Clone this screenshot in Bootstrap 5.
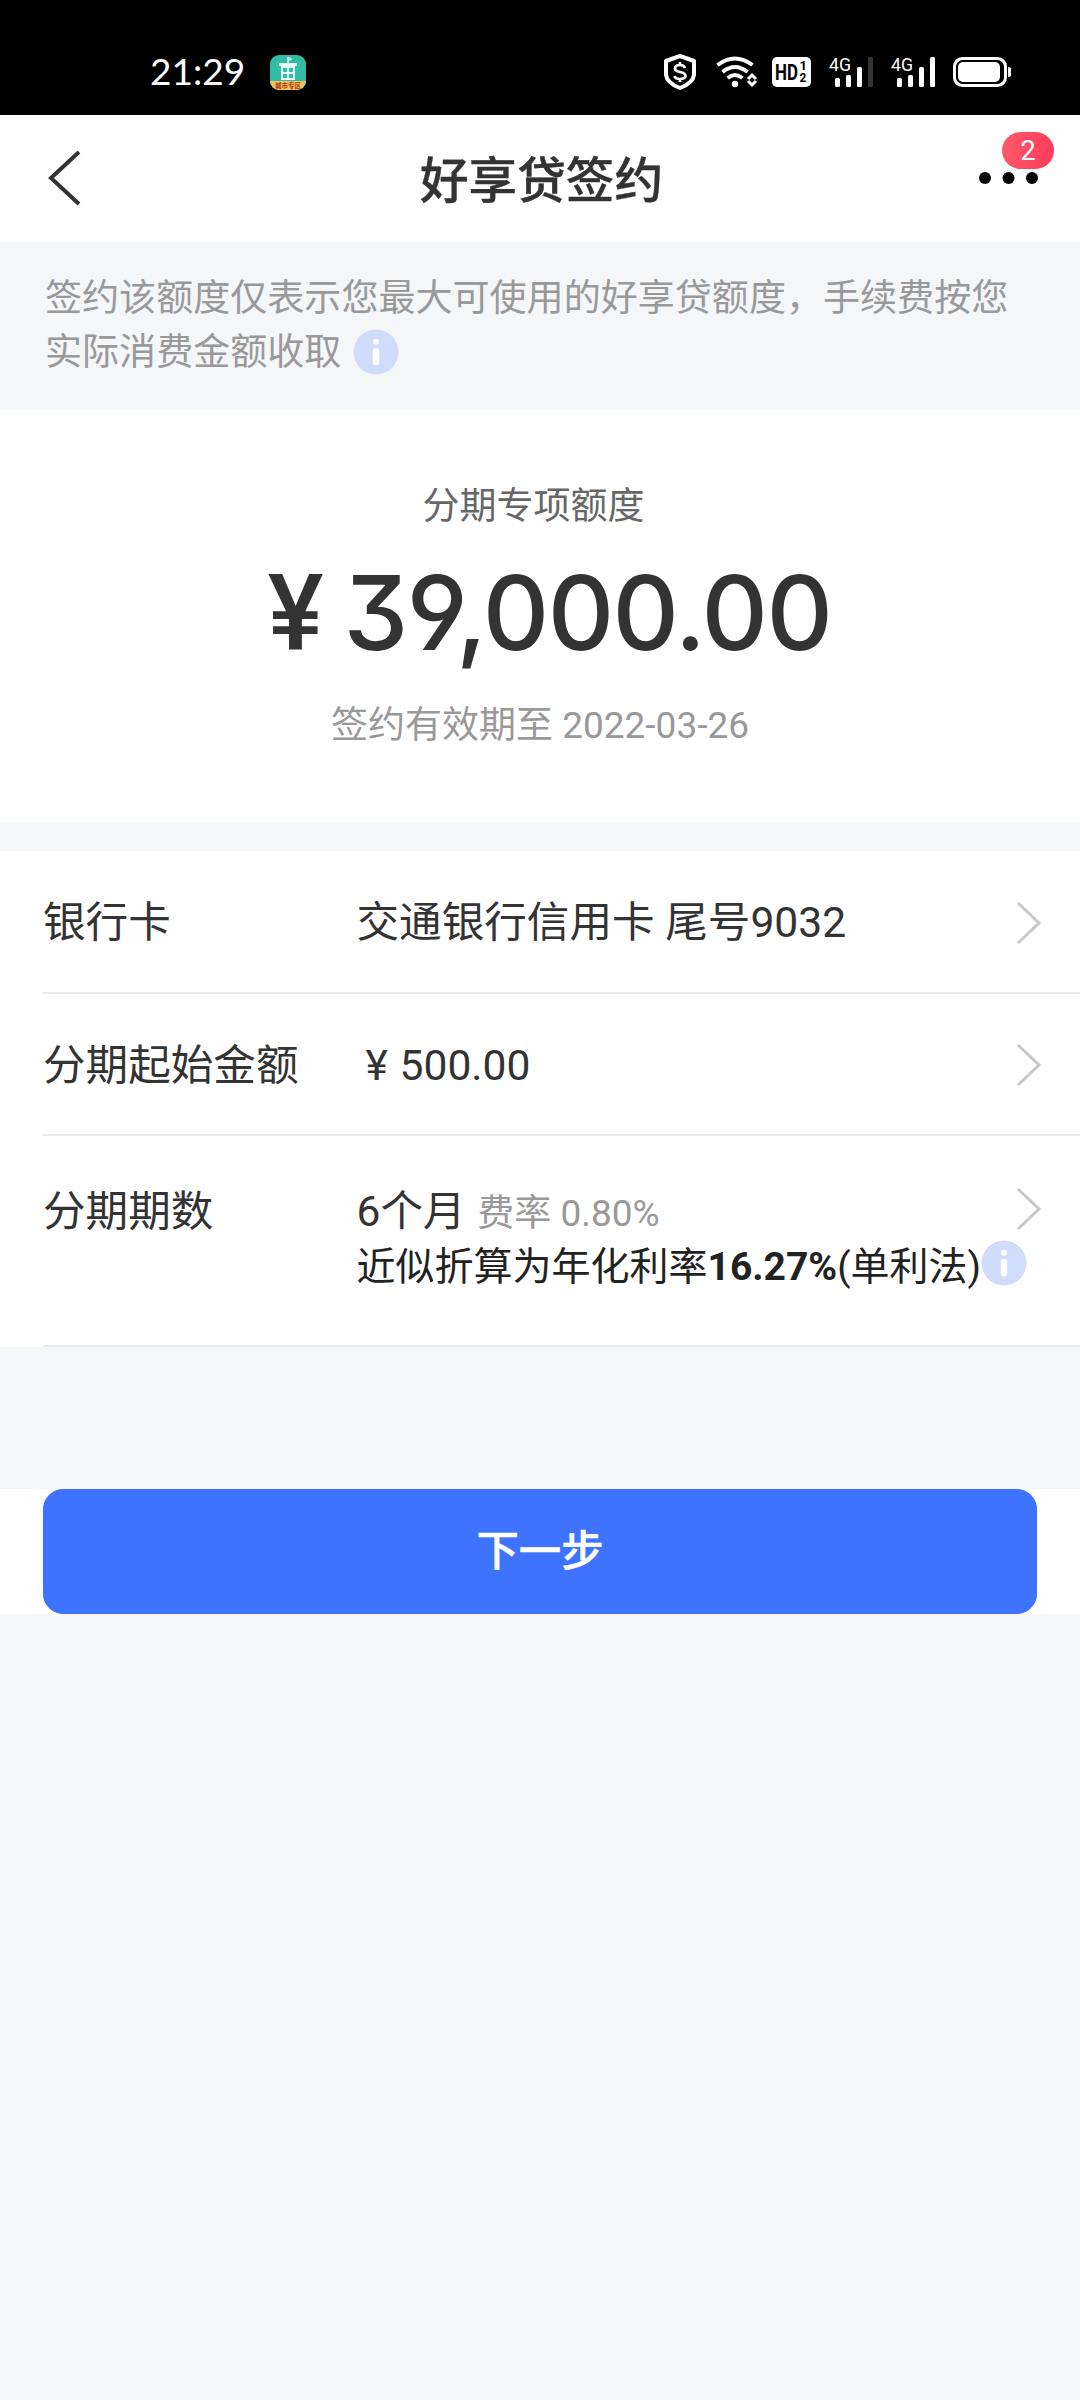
<!DOCTYPE html>
<html lang="zh-CN">
<head>
<meta charset="utf-8">
<meta name="viewport" content="width=device-width, initial-scale=1">
<title>好享贷签约</title>
<link href="https://cdn.jsdelivr.net/npm/bootstrap@5.3.0/dist/css/bootstrap.min.css" rel="stylesheet">
<style>
body{font-family:Roboto,"Noto Sans CJK SC",sans-serif;background:#f4f6f8;color:#333;font-size:42.6px;line-height:1.2;min-height:2400px}
svg{display:block;flex:none}
.status-bar{height:115px;background:#000;padding:28px 68px 0 150px}
.clock{font-family:Lato,sans-serif;font-size:37px;line-height:86px;color:#fff;width:119px}
.title-bar{height:127px;padding:0 41px 0 46px}
.page-title{font-size:48.6px;font-weight:500;line-height:60px;padding-top:7px;margin-left:-2px;-webkit-text-stroke:.4px #333}
.more-box{width:60px;height:12px;margin-top:-2px}
.count-badge{position:absolute;left:23px;top:-40px;width:52px;height:37px;border-radius:19px;background:linear-gradient(100deg,#ff5b6c,#ff3a59);color:#fff;font-size:27px;line-height:38px;text-align:center}
.notice{height:168px;padding:30px 45px 0;font-size:37.05px;line-height:54px;color:#999;white-space:nowrap}
.notice svg{margin-top:-2px}
.amount-box{height:412px;padding-top:75px;margin-bottom:29px}
.amount-label{font-size:37px;line-height:44px;color:#666;padding-right:13px}
.amount-num{font-family:Inter,sans-serif;font-size:103px;font-weight:500;line-height:120px;margin-top:24px;white-space:nowrap;font-feature-settings:"cv09","cv04";letter-spacing:-1.6px;padding-left:19px}
.yen-big{font-family:Roboto,sans-serif;font-size:105px;letter-spacing:0;line-height:1;margin-right:20px}
.yen-small{display:inline-block;width:43px;padding-left:9px}
.amount-date{font-size:37px;line-height:44px;color:#999;margin-top:31px}
.form-line{height:142px;margin-left:43px;padding-right:38px;border-bottom:2px solid #e8e9eb}
.form-line:first-child{height:143px}
.form-line>span{padding-top:3px}
.form-name{width:313.5px}
.term-line{height:211px;padding-top:49px}
.term-line>.form-name{padding-top:1px}
.term-text{padding-top:1px}
.sub-rate{font-size:37px;color:#999;margin-left:1px}
.year-rate{font-size:39px;line-height:48px;color:#222;white-space:nowrap;margin-top:4px}
.year-rate span{padding-top:2px}
.year-rate svg{margin-top:-1px}
.next-wrap{margin-top:142px;height:125px;padding:0 43px}
.next-btn{--bs-btn-bg:#3d73ff;--bs-btn-border-color:#3d73ff;--bs-btn-color:#fff;--bs-btn-border-radius:20px;--bs-btn-font-size:42.4px;--bs-btn-font-weight:500;--bs-btn-padding-y:0;-webkit-text-stroke:.5px #fff}
</style>
</head>
<body>
<svg width="0" height="0" class="position-absolute">
  <defs>
    <symbol id="info" viewBox="0 0 46 46"><circle cx="23" cy="23" r="22.5" fill="#d0dcfc"/><circle cx="23" cy="12.8" r="3" fill="#fff"/><rect x="19.8" y="19" width="6.4" height="17.5" rx="3.2" fill="#fff"/></symbol>
    <symbol id="next" viewBox="0 0 26 46"><path d="M2 4l21 20L2 44" fill="none" stroke="#c8c8c8" stroke-width="3"/></symbol>
  </defs>
</svg>

<div class="status-bar d-flex align-items-start">
  <span class="clock">21:29</span>
  <svg width="38" height="86" viewBox="0 0 38 86">
    <clipPath id="appClip"><rect x="1" y="27" width="36" height="35" rx="9"/></clipPath>
    <g clip-path="url(#appClip)"><rect y="26" width="38" height="38" fill="#31bda5"/><rect y="53" width="38" height="12" fill="#f3c05a"/></g>
    <path d="M10 35h18v3H10zM12 38h14v14H12z" fill="#e4fbf6"/><path d="M19 29v7m0-7l3 2-3 2" stroke="#d9faf4" stroke-width="1.5" fill="none"/>
    <path d="M14 40h4v4h-4zm6 0h4v4h-4zm-6 6h4v4h-4zm6 0h4v4h-4z" fill="#31bda5"/>
    <text x="19" y="60" font-size="6.500" font-weight="700" text-anchor="middle" fill="#a83b13">城市专区</text>
  </svg>
  <svg class="ms-auto" width="350" height="86" viewBox="662 28 350 86">
    <g fill="none" stroke="#fff">
      <path d="M680 56L694 61V75Q693 83 680 88Q667 83 666 75V61Z" stroke-width="4" stroke-linejoin="round"/>
      <path d="M685 68Q684 65 680 65Q675 65 675 68.500Q675 71 680 72Q685.500 73 685.500 76Q685 79 680 79Q675 79 674.500 76M680 62V65M680 79V82" stroke-width="2.700"/>
      <path d="M717.500 65Q735 52 752.500 65M722.500 72Q735 62 747.500 72M727.500 78Q735 72 742.500 78" stroke-width="4"/>
      <path d="M748 79l4-4 4 4M748 81l4 4 4-4" stroke-width="3"/>
      <rect x="954.500" y="58.500" width="51" height="27" rx="8" stroke-width="3"/>
    </g>
    <g fill="#fff">
      <circle cx="735" cy="84" r="3.200"/>
      <rect x="772" y="57" width="39" height="30" rx="5"/>
      <rect x="835" y="78" width="5" height="9" rx="1.500"/><rect x="846" y="75" width="5" height="12" rx="1.500"/><rect x="857" y="67" width="5" height="20" rx="1.500"/><rect x="868" y="57" width="5" height="30" rx="1" fill="#333"/>
      <rect x="897" y="78" width="5" height="9" rx="1.500"/><rect x="908" y="75" width="5" height="12" rx="1.500"/><rect x="919" y="67" width="5" height="20" rx="1.500"/><rect x="930" y="57" width="5" height="30" rx="1.500"/>
      <rect x="958" y="62" width="42" height="20" rx="5"/><path d="M1008 67q3 0 3 2v6q0 2-3 2z"/>
      <text x="829" y="71" font-size="19" textLength="22" lengthAdjust="spacingAndGlyphs">4G</text>
      <text x="891" y="71" font-size="19" textLength="22" lengthAdjust="spacingAndGlyphs">4G</text>
    </g>
    <g font-weight="700" fill="#000"><text x="775" y="80" font-size="22" textLength="23" lengthAdjust="spacingAndGlyphs">HD</text><text x="799.500" y="70" font-size="13">1</text><text x="799.500" y="82" font-size="12">2</text></g>
  </svg>
</div>

<header class="title-bar bg-white d-flex align-items-center justify-content-between">
  <svg width="60" height="60" viewBox="0 0 60 60"><path d="M33 3L5 29L33 55" fill="none" stroke="#333" stroke-width="4"/></svg>
  <h1 class="page-title mb-0 mt-0">好享贷签约</h1>
  <div class="more-box position-relative">
    <svg width="60" height="12" viewBox="0 0 60 12"><circle cx="6" cy="6" r="6"/><circle cx="29.500" cy="6" r="6"/><circle cx="53" cy="6" r="6"/></svg>
    <span class="count-badge">2</span>
  </div>
</header>

<section class="notice">
  <div>签约该额度仅表示您最大可使用的好享贷额度，手续费按您</div>
  <div class="d-flex align-items-center"><span>实际消费金额收取</span><svg class="ms-2" width="52" height="46" viewBox="-4 0 52 46"><use href="#info" width="46" height="46"/></svg></div>
</section>

<section class="amount-box bg-white text-center">
  <div class="amount-label">分期专项额度</div>
  <div class="amount-num"><span class="yen-big">¥</span>39,000.00</div>
  <div class="amount-date">签约有效期至 2022-03-26</div>
</section>

<main>
  <div class="bg-white">
    <div class="form-line d-flex align-items-center">
      <span class="form-name">银行卡</span><span>交通银行信用卡 尾号9032</span>
      <svg class="ms-auto" width="26" height="46"><use href="#next"/></svg>
    </div>
    <div class="form-line d-flex align-items-center">
      <span class="form-name">分期起始金额</span><span><span class="yen-small">¥</span>500.00</span>
      <svg class="ms-auto" width="26" height="46"><use href="#next"/></svg>
    </div>
    <div class="form-line term-line d-flex align-items-start">
      <span class="form-name">分期期数</span>
      <div class="flex-grow-1">
        <div class="d-flex align-items-start justify-content-between"><span class="term-text">6个月 <span class="sub-rate">费率 0.80%</span></span><svg width="26" height="46"><use href="#next"/></svg></div>
        <div class="year-rate d-flex"><span>近似折算为年化利率<b>16.27%</b>(单利法)</span><svg width="46" height="46"><use href="#info"/></svg></div>
      </div>
    </div>
  </div>
  <div class="next-wrap bg-white"><button type="button" class="btn btn-primary next-btn w-100 h-100">下一步</button></div>
</main>
<script src="https://cdn.jsdelivr.net/npm/bootstrap@5.3.0/dist/js/bootstrap.bundle.min.js"></script>
</body>
</html>
